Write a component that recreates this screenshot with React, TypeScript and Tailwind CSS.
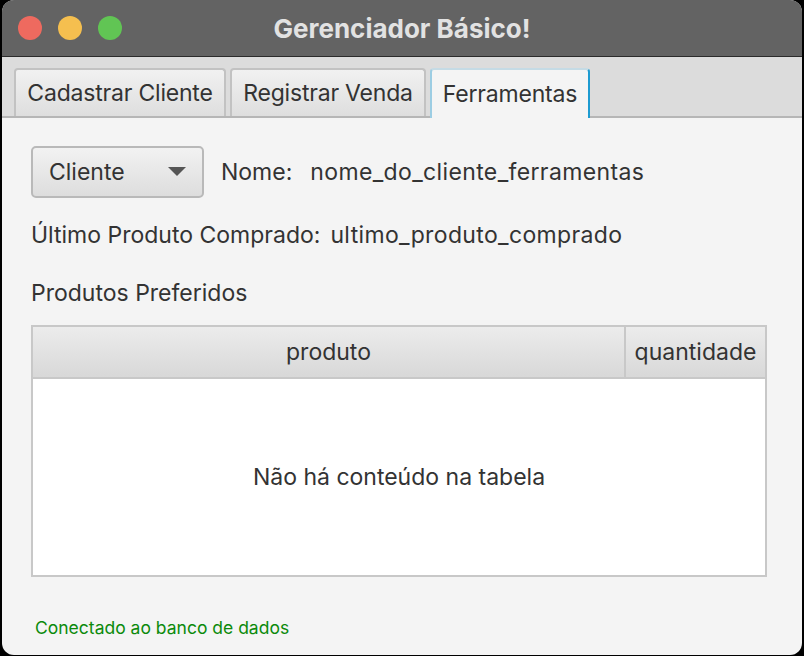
import React from 'react'

const font = { fontFamily: 'Inter, "Noto Sans", sans-serif' }

const tabs = [
  { label: 'Cadastrar Cliente', width: 'w-[212px]' },
  { label: 'Registrar Venda', width: 'w-[196px]' },
  { label: 'Ferramentas', width: 'w-[160px]' },
]

const App = () => {
  const selected = 2

  return (
    <div className="w-[804px] h-[656px] bg-black" style={font}>
      <div className="ml-[2px] w-[800px] h-[655px] rounded-[12px] overflow-hidden flex flex-col bg-[#f4f4f4]">
        {/* barra de titulo */}
        <div className="relative h-[57px] bg-[#636363] border-b border-[#2b2b2b] flex items-center justify-center shrink-0">
          <div className="absolute left-[16px] top-[16px] flex gap-[16px]">
            <span className="w-[24px] h-[24px] rounded-full bg-[#ee6a5f]" />
            <span className="w-[24px] h-[24px] rounded-full bg-[#f5bf4f]" />
            <span className="w-[24px] h-[24px] rounded-full bg-[#61c554]" />
          </div>
          <span className="text-[26px] font-bold text-[#e2e2e2]">Gerenciador Básico!</span>
        </div>

        {/* abas */}
        <div className="h-[61px] bg-[#dcdcdc] border-b-2 border-[#b6b6b6] flex items-end gap-[4px] pl-[12px] shrink-0">
          {tabs.map((tab, i) => (
            <div
              key={tab.label}
              className={
                i === selected
                  ? `${tab.width} h-[50px] -mb-[2px] flex items-center justify-center rounded-t-[4px] bg-[#f4f4f4] border-x-2 border-t-2 border-l-[#9ccde3] border-r-[#1d9bd1] border-t-[#c5dbe5] text-[23px] tracking-[-0.2px] text-[#333]`
                  : `${tab.width} h-[48px] flex items-center justify-center rounded-t-[4px] bg-gradient-to-b from-[#f1f1f1] to-[#dedede] border-x-2 border-t-2 border-[#c2c2c2] text-[23px] tracking-[-0.2px] text-[#333]`
              }
            >
              {tab.label}
            </div>
          ))}
        </div>

        {/* conteudo */}
        <div className="flex-1 flex flex-col px-[29px] pt-[28px] text-[#333]">
          <div className="flex items-center">
            <div className="w-[173px] h-[52px] rounded-[5px] border-2 border-[#b9b9b9] bg-gradient-to-b from-[#f2f2f2] to-[#dddddd] flex items-center justify-between pl-[16px] pr-[16px] text-[23px]">
              <span>Cliente</span>
              <svg width="18" height="10" viewBox="0 0 18 10">
                <path d="M0 0 L18 0 L9 9 Z" fill="#555" />
              </svg>
            </div>
            <span className="ml-[17px] text-[23px]">Nome:</span>
            <span className="ml-[18px] text-[23px] tracking-[0.37px]">nome_do_cliente_ferramentas</span>
          </div>

          <div className="mt-[19px] flex items-center text-[23px] h-[36px]">
            <span>Último Produto Comprado:</span>
            <span className="ml-[10px] tracking-[0.35px]">ultimo_produto_comprado</span>
          </div>

          <div className="mt-[22px] text-[23px] h-[36px] flex items-center">Produtos Preferidos</div>

          <div className="mt-[14px] w-[736px] h-[252px] border-2 border-[#c8c8c8] bg-white flex flex-col">
            <div className="h-[52px] flex border-b-2 border-[#c8c8c8] text-[23px]">
              <div className="w-[593px] flex items-center justify-center bg-gradient-to-b from-[#ececec] to-[#d8d8d8] border-r-2 border-[#c8c8c8]">
                produto
              </div>
              <div className="flex-1 flex items-center justify-center bg-gradient-to-b from-[#ececec] to-[#d8d8d8]">
                quantidade
              </div>
            </div>
            <div className="flex-1 flex items-center justify-center text-[23px]">
              Não há conteúdo na tabela
            </div>
          </div>

          <div className="mt-[38px] ml-[4px] text-[17.5px] text-[#0b8a0b]">Conectado ao banco de dados</div>
        </div>
      </div>
    </div>
  )
}

export default App
